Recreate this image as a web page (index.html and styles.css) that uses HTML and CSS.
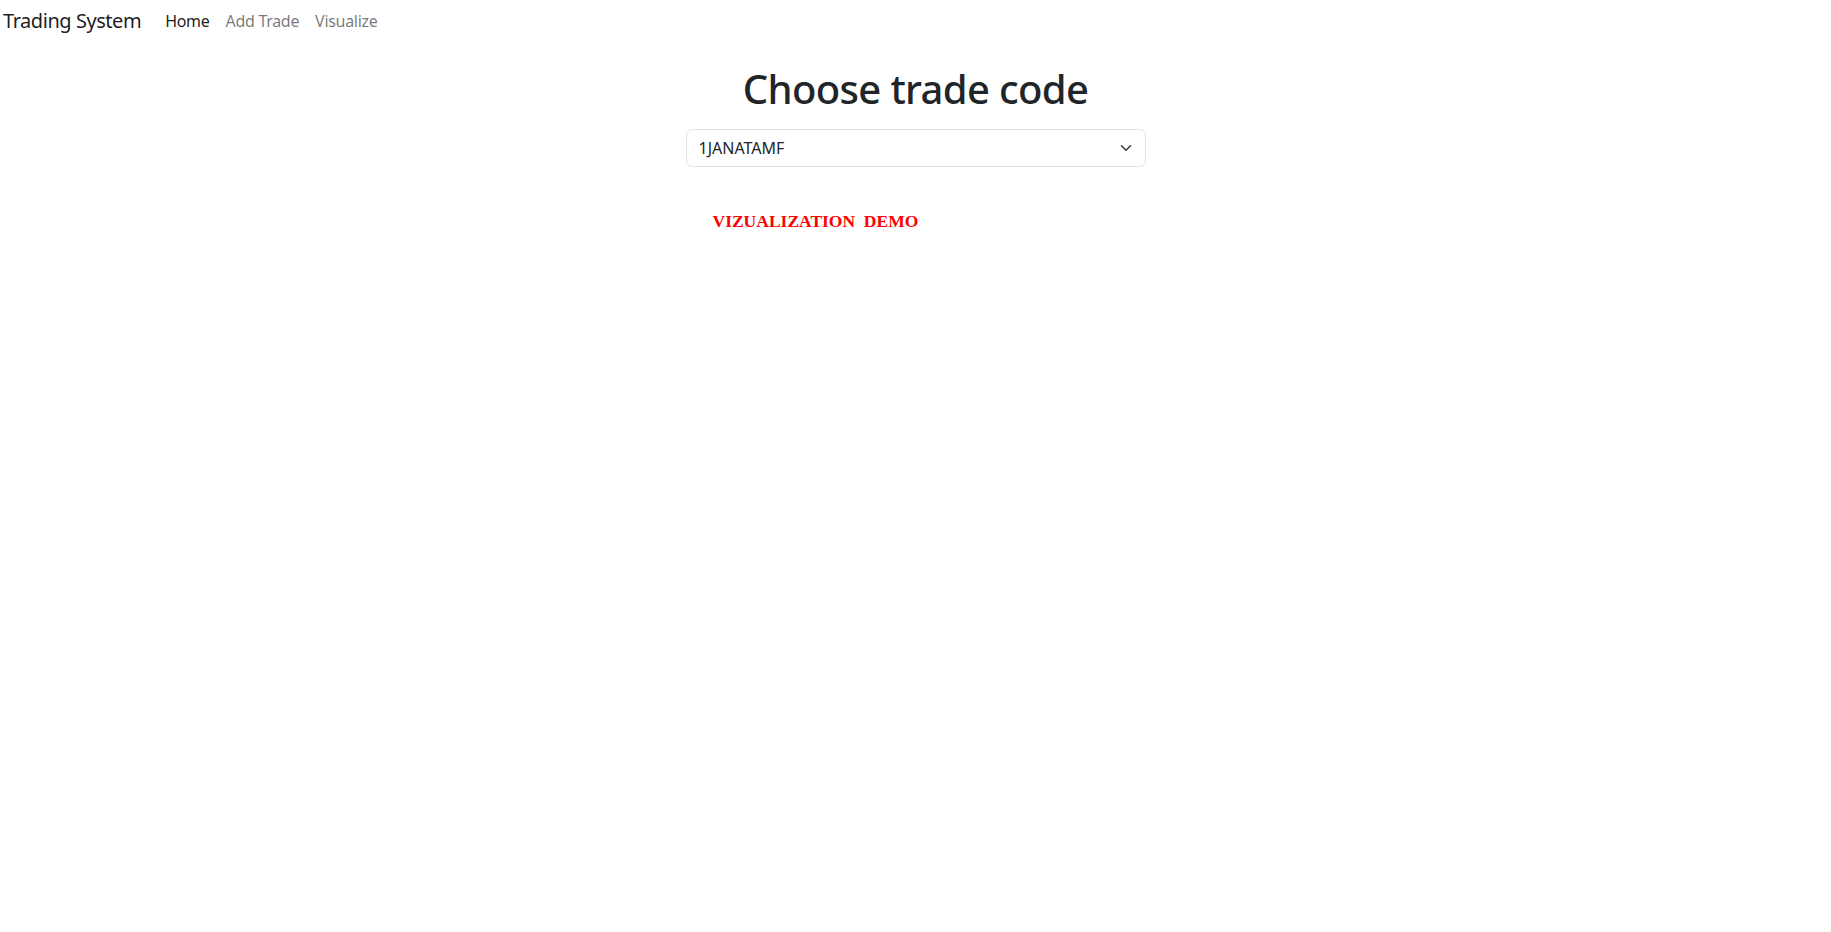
FILE: index.html
```html
<!DOCTYPE html>
<html lang="en">
<head>
<meta charset="utf-8">
<title>Trading System</title>
<link rel="stylesheet" href="styles.css">
</head>
<body>
<nav class="navbar">
  <a class="brand" href="#">Trading System</a>
  <ul class="nav-links">
    <li><a class="nav-link active" href="#">Home</a></li>
    <li><a class="nav-link" href="#">Add Trade</a></li>
    <li><a class="nav-link" href="#">Visualize</a></li>
  </ul>
</nav>
<main class="main">
  <h1 class="title">Choose trade code</h1>
  <div class="select-wrap">
    <select class="form-select">
      <option>1JANATAMF</option>
    </select>
    <svg class="chevron" viewBox="0 0 16 16" width="16" height="12" preserveAspectRatio="xMidYMid meet"><path d="m2 5 6 6 6-6" fill="none" stroke="#343a40" stroke-linecap="round" stroke-linejoin="round" stroke-width="2"/></svg>
  </div>
  <div class="chart">
    <div class="chart-title">VIZUALIZATION&nbsp; DEMO</div>
  </div>
</main>
</body>
</html>
```

FILE: styles.css
```css
* { box-sizing: border-box; }
html, body { margin: 0; padding: 0; background: #fff; }
body {
  font-family: "Noto Sans", "Open Sans", sans-serif;
  color: #212529;
  font-size: 16px;
}
.navbar {
  display: flex;
  align-items: center;
  height: 40px;
  padding-top: 2px;
}
.brand {
  font-size: 20px;
  color: rgba(0,0,0,.9);
  text-decoration: none;
  margin-left: 3px;
  margin-right: 16px;
  line-height: 30px;
  letter-spacing: -0.45px;
}
.nav-links {
  display: flex;
  list-style: none;
  margin: 0;
  padding: 0;
}
.nav-link {
  display: block;
  padding: 0 8px;
  font-size: 16px;
  line-height: 24px;
  color: rgba(0,0,0,.55);
  text-decoration: none;
  letter-spacing: -0.3px;
}
.nav-link.active { color: rgba(0,0,0,.9); }
.main {
  display: flex;
  flex-direction: column;
  align-items: center;
}
.title {
  margin: 25px 0 0;
  font-size: 40px;
  font-weight: 500;
  line-height: 48px;
  color: #212529;
  letter-spacing: -0.65px;
}
.select-wrap {
  position: relative;
  width: 460px;
  margin-top: 16px;
}
.form-select {
  display: block;
  width: 100%;
  height: 38px;
  padding: 6px 36px 6px 12px;
  font-family: inherit;
  font-size: 16px;
  line-height: 24px;
  color: #212529;
  background: #fff;
  border: 1px solid #dee2e6;
  border-radius: 6px;
  -webkit-appearance: none;
  appearance: none;
}
.chevron {
  position: absolute;
  right: 12px;
  top: 13px;
  pointer-events: none;
}
.chart {
  width: 460px;
  padding-left: 27px;
  margin-top: 44px;
}
.chart-title {
  font-family: "Liberation Serif", "Times New Roman", serif;
  font-weight: bold;
  font-size: 17.5px;
  color: #ff0000;
  line-height: 20px;
}
```
